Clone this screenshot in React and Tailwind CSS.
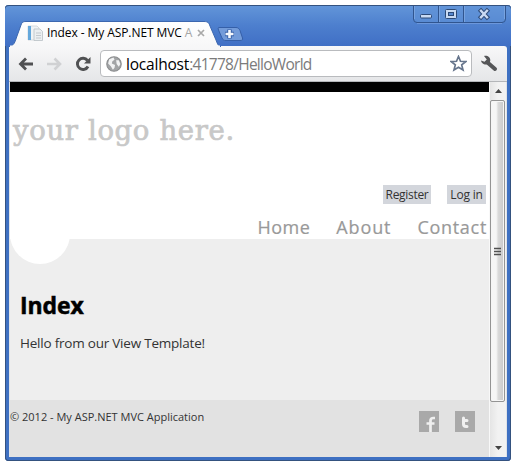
const ui = "font-['Open_Sans','Noto_Sans',sans-serif] whitespace-nowrap";

function Tab() {
  return (
    <div className="relative mt-[15px] h-[26px] w-[212px] shrink-0">
      <svg className="absolute left-0 top-0" width="212" height="27" viewBox="0 0 212 27">
        <defs>
          <linearGradient id="tab" x1="0" y1="0" x2="0" y2="1">
            <stop offset="0" stopColor="#ffffff" />
            <stop offset="1" stopColor="#f7f7f8" />
          </linearGradient>
        </defs>
        <path d="M0 26.5C5 26 6 22 8 16L12 5C13 2 14 1.5 17 1.5H195C199 1.5 200 3 201 6L207 20C208.500 24 209 26 212 26.5Z" fill="url(#tab)" stroke="#3c67af" strokeWidth="1" />
        <rect x="1" y="25.500" width="210" height="2" fill="#f7f7f8" />
      </svg>
      <div className="relative flex h-full items-center pl-[18px]">
        <svg width="16" height="16" viewBox="0 0 16 16">
          <path d="M1 1H10L12 3V15H1Z" fill="#f0f3f5" stroke="#c8cfd4" strokeWidth=".7" />
          <rect x="1" y="1" width="3" height="14" fill="#65a8dc" />
          <path d="M7 4H13L15.500 6.500V15.500H7Z" fill="#eceff1" stroke="#b9c0c5" strokeWidth=".8" />
          <path d="M9 8H14M9 10.500H14M9 13H14" stroke="#c3c9ce" />
        </svg>
        <span className={`${ui} ml-[4px] w-[147px] overflow-hidden text-[12px] leading-[16px] tracking-[-0.08px] text-black`}>
          Index - My ASP.NET MVC <span className="text-[#a5a5a5]">A</span>
        </span>
        <svg className="ml-[3px]" width="8" height="8" viewBox="0 0 8 8">
          <path d="M1 1L7 7M7 1L1 7" stroke="#a9a9a9" strokeWidth="1.700" />
        </svg>
      </div>
    </div>
  );
}

function TitleBar() {
  return (
    <div className="flex h-[41px] items-start rounded-t-[4px] bg-linear-to-b from-[#6396d9] via-[#4d7fce] to-[#406fc5] pl-[4px] shadow-[inset_0_1px_0_#34527f]">
      <Tab />
      <svg className="-ml-[4px] mt-[21px]" width="27" height="16" viewBox="0 0 27 16">
        <path d="M2 1.500H19C21 1.500 22 2.500 23 4.500L25.500 12C26 14 25 14.500 23 14.500H9C7 14.500 6 14 5 12L1.500 4C1 2.500 1 1.500 2 1.500Z" fill="#739bd9" stroke="#355fa8" />
        <path d="M8 8H17M12.500 3.500V12.500" stroke="#355fa8" strokeWidth="4.500" />
        <path d="M8.500 8H16.500M12.500 4V12" stroke="#f5f8fc" strokeWidth="2.600" />
      </svg>
      <svg className="ml-auto mr-[4px]" width="95" height="19" viewBox="0 0 95 19">
        <path d="M1.500 1V14Q1.500 17.500 5 17.500H90Q93.500 17.500 93.500 14V1" fill="#6293d7" fillOpacity=".5" stroke="#30558f" />
        <path d="M2.500 1V14M27.500 1V17M52.500 1V17M92.500 1V14" stroke="#78a3df" />
        <path d="M26.500 1V17M51.500 1V17" stroke="#30558f" />
        <path d="M5 18.500H90" stroke="#6c97db" />
        <rect x="8.500" y="9.500" width="11" height="3.500" rx="1" fill="#c9daf3" stroke="#2d4a77" />
        <rect x="33.500" y="4.500" width="11" height="9" rx="1" fill="#c9daf3" stroke="#2d4a77" />
        <rect x="36.500" y="7.500" width="5" height="3" fill="#5688d1" stroke="#2d4a77" />
        <path d="M69 5.800L75 12.200M75 5.800L69 12.200" stroke="#2d4a77" strokeWidth="4.400" strokeLinecap="square" />
        <path d="M69 5.800L75 12.200M75 5.800L69 12.200" stroke="#c9daf3" strokeWidth="2.400" strokeLinecap="square" />
      </svg>
    </div>
  );
}

function Toolbar() {
  return (
    <div className="flex h-[36px] items-center rounded-tr-[3px] border-b border-[#b4b6b9] bg-linear-to-b from-[#f8f8f9] to-[#e5e6e8]">
      <svg className="ml-[9px]" width="16" height="16" viewBox="0 0 16 16">
        <path d="M15 8H3M8 2.500L2.500 8L8 13.500" fill="none" stroke="#505153" strokeWidth="2.800" />
      </svg>
      <svg className="ml-[13px]" width="16" height="16" viewBox="0 0 16 16">
        <path d="M0 8H12M7.500 2.500L13 8L7.500 13.500" fill="none" stroke="#d0d1d3" strokeWidth="2.600" />
      </svg>
      <svg className="ml-[12px]" width="17" height="16" viewBox="0 0 17 16">
        <path d="M13 10.500A5.600 5.600 0 1 1 12.500 4.500" fill="none" stroke="#505153" strokeWidth="2.900" />
        <path d="M15.500 1V7.500H9Z" fill="#505153" />
      </svg>
      <div className="ml-[8px] flex h-[27px] w-[372px] items-center rounded-[4px] border border-[#b9bbbe] bg-white">
        <svg className="ml-[5px]" width="16" height="16" viewBox="0 0 15 15">
          <circle cx="7.500" cy="7.500" r="6.800" fill="#a2a4a6" stroke="#8b8d8f" />
          <path d="M3 3L7 1.500L8 3.500L6 5L5.500 7L8.500 8.500L8 11L6.500 13L4.500 9.500L2 7ZM9.500 4L12 4L13.500 7.500L12 10L10 7.500Z" fill="#f1f2f3" />
        </svg>
        <span className={`${ui} ml-[4px] text-[15.500px] leading-[20px] tracking-[-0.720px] text-[#7b7b7b]`}>
          <span className="tracking-[-0.200px] text-black">localhost</span>:41778/HelloWorld
        </span>
        <svg className="ml-auto mr-[4px]" width="17" height="17" viewBox="0 0 17 17">
          <path d="M8.500 1.500L10.500 6.300L15.700 6.600L11.700 9.900L13 15L8.500 12.200L4 15L5.300 9.900L1.300 6.600L6.500 6.300Z" fill="#fff" stroke="#66758c" strokeWidth="1.700" />
        </svg>
      </div>
      <svg className="ml-[8px]" width="18" height="17" viewBox="0 0 18 17">
        <path d="M7.500 7.500L15 14" stroke="#555658" strokeWidth="4" strokeLinecap="round" />
        <path d="M4 1C7 0 10.500 2 10.300 5.500C10 9 6.500 10.500 3.500 9C2 8.300 1.200 7 1 5.500L4.500 6.800L6.800 4.500Z" fill="#555658" />
      </svg>
    </div>
  );
}

function Header() {
  return (
    <header className="relative flex h-[157px] flex-col border-t-[10px] border-black bg-white">
      <div className="ml-[3px] mt-[20px] whitespace-nowrap font-['DejaVu_Serif',serif] text-[27.500px] leading-[36px] tracking-[0.650px] text-[#c8c8c8] [-webkit-text-stroke:0.7px_#c8c8c8]">
        your logo here.
      </div>
      <div className={`${ui} mr-[3px] mt-[37px] flex justify-end gap-[16px] text-[12px] leading-[19px] text-[#333]`}>
        <span className="w-[48px] bg-[#d3d6dc] text-center tracking-[-0.300px]">Register</span>
        <span className="w-[39px] bg-[#d3d6dc] text-center tracking-[-0.200px]">Log in</span>
      </div>
      <nav className={`${ui} mr-[2px] mt-[10px] flex justify-end gap-[26px] text-[18px] leading-[26px] text-[#999] [-webkit-text-stroke:0.2px_#999]`}>
        <span className="tracking-[0.500px]">Home</span>
        <span className="tracking-[0.900px]">About</span>
        <span className="tracking-[0.700px]">Contact</span>
      </nav>
      <div className="absolute left-0 top-[147px] h-[25px] w-[60px] overflow-hidden">
        <div className="-mt-[35px] h-[60px] w-[60px] rounded-full bg-white" />
      </div>
    </header>
  );
}

function Footer() {
  return (
    <footer className="flex flex-1 items-start bg-[#e2e2e2] text-[#333]">
      <span className={`${ui} mt-[8px] text-[11px] leading-[18px]`}>© 2012 - My ASP.NET MVC Application</span>
      <div className="ml-auto mr-[14px] mt-[11px] flex gap-[16px]">
        <svg width="20" height="21" viewBox="0 0 20 21">
          <rect width="20" height="21" fill="#a9a9a9" />
          <path d="M11.500 21V9.500Q11.500 7 14.500 7H16M7.500 12.500H15.500" fill="none" stroke="#f0f0f0" strokeWidth="2.700" />
        </svg>
        <svg width="20" height="21" viewBox="0 0 20 21">
          <rect width="20" height="21" fill="#a9a9a9" />
          <path d="M8.500 7V13Q8.500 15.500 11 15.500H12M8.500 9.500H12" fill="none" stroke="#f0f0f0" strokeWidth="3" strokeLinecap="round" />
        </svg>
      </div>
    </footer>
  );
}

function Scrollbar() {
  return (
    <div className="flex w-[18px] flex-col items-start border-l border-[#f8f8f8] bg-linear-to-r from-[#e5e5e5] via-[#f2f2f2] to-[#f2f2f2]">
      <div className="flex h-[18px] w-[16px] items-center justify-center">
        <svg width="7" height="4" viewBox="0 0 7 4"><path d="M0 4L3.500 0L7 4Z" fill="#444" /></svg>
      </div>
      <div className="flex h-[302px] w-[15px] items-center justify-center rounded-[2px] border border-[#949494] bg-linear-to-r from-[#f6f6f6] from-40% via-[#dadada] via-55% to-[#c9c9ca] shadow-[inset_0_0_0_1px_#f5f5f5]">
        <svg width="7" height="9" viewBox="0 0 7 9"><path d="M0 1.500H7M0 4.500H7M0 7.500H7" stroke="#515151" strokeWidth="1.300" /></svg>
      </div>
      <div className="mt-auto flex h-[18px] w-[16px] items-center justify-center">
        <svg width="7" height="4" viewBox="0 0 7 4"><path d="M0 0L3.500 4L7 0Z" fill="#444" /></svg>
      </div>
    </div>
  );
}

export default function App() {
  return (
    <div className="h-[465px] w-[515px] overflow-hidden bg-white pl-[5px] pt-[5px]">
      <div className="flex h-[456px] w-[506px] flex-col rounded-[4px] bg-[#3e70c2] shadow-[inset_1px_0_0_#34527f,inset_-1px_0_0_#34527f,inset_0_-1px_0_#34527f]">
        <TitleBar />
        <div className="mx-[4px] mb-[4px] flex min-h-0 flex-1 flex-col">
          <Toolbar />
          <div className="flex min-h-0 flex-1 border-x border-[#dfe3e8]">
            <main className="flex w-[479px] shrink-0 flex-col bg-[#eee]">
              <Header />
              <section className={`${ui} flex h-[161px] flex-col pl-[10px]`}>
                <h1 className="mt-[49px] text-[23px] font-bold leading-[34px] tracking-[-0.100px] text-black [-webkit-text-stroke:0.5px_#000]">Index</h1>
                <p className="mt-[11px] text-[13.500px] leading-[20px] tracking-[-0.220px] text-[#333]">Hello from our View Template!</p>
              </section>
              <Footer />
            </main>
            <Scrollbar />
          </div>
        </div>
      </div>
    </div>
  );
}
